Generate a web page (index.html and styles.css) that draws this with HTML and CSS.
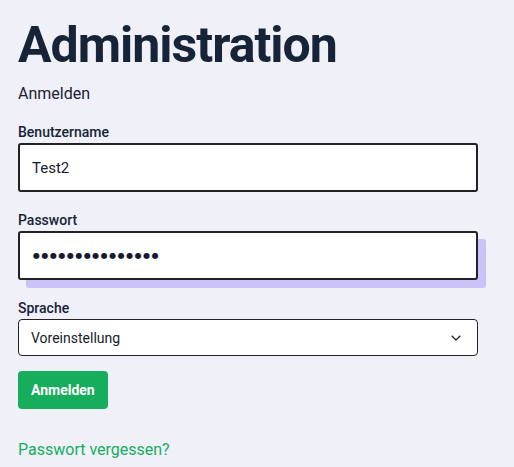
FILE: index.html
```html
<!DOCTYPE html>
<html lang="de">
<head>
<meta charset="utf-8">
<title>Administration</title>
<link rel="stylesheet" href="styles.css">
</head>
<body>
<main class="page">
  <h1 class="title">Administration</h1>
  <p class="subtitle">Anmelden</p>
  <form class="form">
    <div class="field">
      <label class="label" for="user">Benutzername</label>
      <input class="input" id="user" type="text" value="Test2">
    </div>
    <div class="field">
      <label class="label" for="pass">Passwort</label>
      <div class="input input-focus dots" id="pass">●●●●●●●●●●●●●●●</div>
    </div>
    <div class="field field-select">
      <label class="label" for="lang">Sprache</label>
      <div class="select" id="lang">
        <span>Voreinstellung</span>
        <svg class="chev" width="10" height="6" viewBox="0 0 10 6"><path d="M0.7 0.7 L5 5 L9.3 0.7" fill="none" stroke="#2a2a2e" stroke-width="1.3"/></svg>
      </div>
    </div>
    <div class="actions">
      <button class="btn" type="button">Anmelden</button>
    </div>
  </form>
  <a class="link" href="#">Passwort vergessen?</a>
</main>
</body>
</html>
```
FILE: styles.css
```css
html, body {
  margin: 0;
  padding: 0;
  background: #eff0f8;
}
body {
  font-family: Roboto, "Liberation Sans", sans-serif;
  color: #161c2d;
}
.page {
  padding: 20px 18px 0 18px;
  width: 460px;
}
.title {
  margin: 0;
  font-size: 50px;
  font-weight: 700;
  line-height: 50px;
  color: #172336;
  letter-spacing: -1px;
}
.subtitle {
  margin: 14px 0 0 0;
  font-size: 16px;
  line-height: 20px;
  color: #1b2233;
}
.form {
  margin-top: 19px;
  display: flex;
  flex-direction: column;
}
.field {
  display: flex;
  flex-direction: column;
  margin-bottom: 19px;
}
.field-select {
  margin-bottom: 15px;
}
.label {
  font-size: 14px;
  font-weight: 500;
  line-height: 18px;
  margin-bottom: 2px;
  color: #172336;
}
.input {
  box-sizing: border-box;
  height: 49px;
  width: 460px;
  border: 2px solid #222226;
  border-radius: 3px;
  background: #fff;
  padding: 0 12px;
  font-family: inherit;
  font-size: 15px;
  color: #161c2d;
  outline: none;
}
.input-focus {
  box-shadow: 8px 8px 0 #cbc3f7;
}
.dots {
  display: flex;
  align-items: center;
  padding-left: 13px;
  font-family: "DejaVu Sans", sans-serif;
  font-size: 8px;
  letter-spacing: 1.5px;
  color: #161c2d;
}
.select {
  box-sizing: border-box;
  height: 37px;
  width: 460px;
  border: 1px solid #222226;
  border-radius: 4px;
  background: #fff;
  display: flex;
  align-items: center;
  justify-content: space-between;
  padding: 0 16px 0 12px;
  font-size: 14px;
  color: #161c2d;
}
.btn {
  display: block;
  background: #16ae5c;
  color: #fff;
  border: none;
  border-radius: 4px;
  height: 38px;
  padding: 0 13px;
  font-family: inherit;
  font-size: 14px;
  font-weight: 700;
}
.link {
  display: inline-block;
  margin-top: 31px;
  font-size: 16px;
  line-height: 20px;
  color: #16ae5c;
  text-decoration: none;
}
```
